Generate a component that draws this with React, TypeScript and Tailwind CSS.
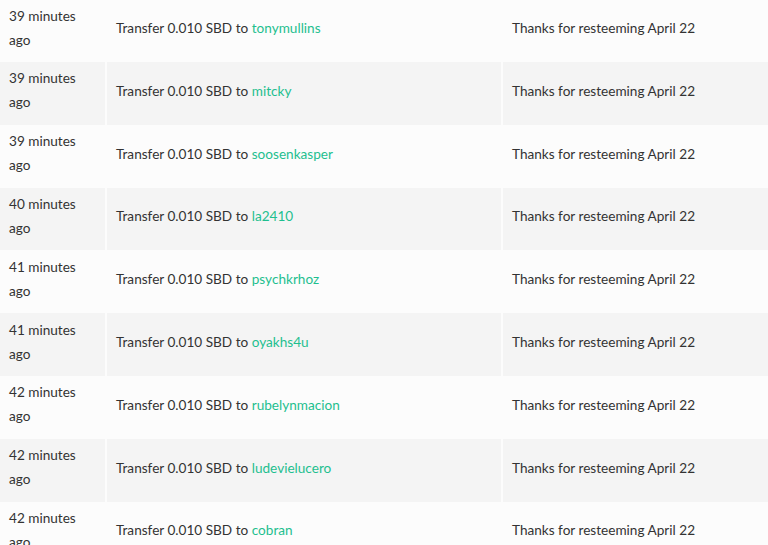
const rows = [
  { time: "39 minutes ago", to: "tonymullins" },
  { time: "39 minutes ago", to: "mitcky" },
  { time: "39 minutes ago", to: "soosenkasper" },
  { time: "40 minutes ago", to: "la2410" },
  { time: "41 minutes ago", to: "psychkrhoz" },
  { time: "41 minutes ago", to: "oyakhs4u" },
  { time: "42 minutes ago", to: "rubelynmacion" },
  { time: "42 minutes ago", to: "ludevielucero" },
  { time: "42 minutes ago", to: "cobran" },
];

export default function App() {
  return (
    <div className="h-[545px] w-[768px] overflow-hidden bg-[#fcfcfc] font-['Lato',sans-serif] text-[13.6px] leading-[24px] text-[#333]">
      <div className="mt-[-0.8px] flex flex-col">
        {rows.map((r, i) => (
          <div
            key={i}
            className={
              "grid h-[62.8px] grid-cols-[105px_394px_1fr] gap-[2px] " +
              (i % 2 === 1 ? "[&>div]:bg-[#f4f4f4]" : "")
            }
          >
            <div className="flex items-center pl-[9px] pr-2 pb-[6px]">
              <span className="w-[80px]">{r.time}</span>
            </div>
            <div className="flex items-center pl-[9px] pb-[5px]">
              <span>
                Transfer 0.010 SBD to{" "}
                <a href="#" className="text-[#1fbf8f]">
                  {r.to}
                </a>
              </span>
            </div>
            <div className="flex items-center pl-[9px] pb-[5px]">
              Thanks for resteeming April 22
            </div>
          </div>
        ))}
      </div>
    </div>
  );
}
